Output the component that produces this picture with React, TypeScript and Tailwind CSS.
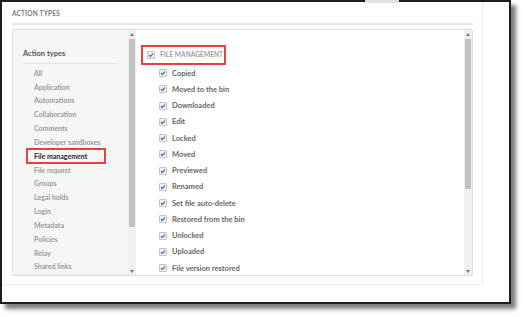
import React from "react";

const leftItems = [
  "All",
  "Application",
  "Automations",
  "Collaboration",
  "Comments",
  "Developer sandboxes",
  "File management",
  "File request",
  "Groups",
  "Legal holds",
  "Login",
  "Metadata",
  "Policies",
  "Relay",
  "Shared links",
];

const rightItems = [
  "Copied",
  "Moved to the bin",
  "Downloaded",
  "Edit",
  "Locked",
  "Moved",
  "Previewed",
  "Renamed",
  "Set file auto-delete",
  "Restored from the bin",
  "Unlocked",
  "Uploaded",
  "File version restored",
];

function Check() {
  return (
    <span className="flex h-[8px] w-[8px] shrink-0 items-center justify-center rounded-[1px] border border-[#c4c4c4] bg-[#eeeeee]">
      <svg width="6" height="6" viewBox="0 0 6 6">
        <path d="M1 3.2 L2.4 4.5 L5 1.6" fill="none" stroke="#2f6fc0" strokeWidth="1.2" />
      </svg>
    </span>
  );
}

function ScrollBar({ thumbTop, thumbH }: { thumbTop: number; thumbH: number }) {
  return (
    <div className="relative flex w-[8px] shrink-0 flex-col bg-[#f0f0f0]">
      <div className="flex h-[8px] items-center justify-center">
        <svg width="4" height="3" viewBox="0 0 4 3">
          <path d="M0 3 L2 0 L4 3 Z" fill="#777" />
        </svg>
      </div>
      <div className="mx-[1px] bg-[#c2c2c2]" style={{ marginTop: thumbTop, height: thumbH }} />
      <div className="flex-1" />
      <div className="flex h-[8px] items-center justify-center">
        <svg width="4" height="3" viewBox="0 0 4 3">
          <path d="M0 0 L2 3 L4 0 Z" fill="#777" />
        </svg>
      </div>
    </div>
  );
}

export default function App() {
  return (
    <div
      className="relative h-[317px] w-[524px] overflow-hidden bg-white"
      style={{ fontFamily: "Lato, 'Open Sans', sans-serif" }}
    >
      <div className="absolute left-[365px] top-0 h-[3px] w-[34px] rounded-b-[2px] bg-[#e2e2e2]" />
      <div className="h-[304px] w-[511px] border-2 border-[#1e1e1e] bg-white shadow-[5px_5px_4px_rgba(0,0,0,0.5)]">
        <div className="h-[283px] w-[481px] border-b border-r border-[#ececec] pl-[10px] pr-[9px]">
          <div className="flex h-[21px] items-center pt-[2px] text-[6.5px] font-bold tracking-[0.2px] text-[#7a7a7a]">
            ACTION TYPES
          </div>
          <div className="h-[2px] bg-[#e6e6e6]" />
          <div className="mt-[4px] flex h-[247px] overflow-hidden rounded-[2px] border border-[#dcdcdc]">
            <div className="w-[115px] shrink-0 overflow-hidden bg-[#f6f6f6] pl-[10px] pr-[10px]">
              <div className="flex h-[33px] items-end pb-[4px] text-[7.5px] font-bold text-[#555]">
                Action types
              </div>
              <div className="h-px bg-[#e3e3e3]" />
              <div className="pt-[2px] pl-[11px]">
                {leftItems.map((t) => (
                  <div key={t} className="relative flex h-[13.85px] items-center">
                    {t === "File management" && (
                      <div className="absolute left-[-8px] top-[-1px] h-[16px] w-[80px] border-2 border-[#e8403f]" />
                    )}
                    <span
                      className={
                        t === "File management"
                          ? "text-[7px] font-bold text-[#2a2a2a]"
                          : "text-[7px] font-bold text-[#9a9a9a]"
                      }
                    >
                      {t}
                    </span>
                  </div>
                ))}
              </div>
            </div>
            <ScrollBar thumbTop={1} thumbH={188} />
            <div className="min-w-0 flex-1 overflow-hidden pl-[5px]">
              <div className="mt-[15px] flex h-[20px] w-[85px] items-center gap-[5px] border-2 border-[#e8403f] pl-[4px]">
                <Check />
                <span className="text-[6.5px] font-bold tracking-[0.1px] text-[#a0a0a0]">FILE MANAGEMENT</span>
              </div>
              <div className="pl-[18px]">
                {rightItems.map((t) => (
                  <div key={t} className="flex h-[16.25px] items-center gap-[5px]">
                    <Check />
                    <span className="text-[7.5px] font-bold text-[#666]">{t}</span>
                  </div>
                ))}
              </div>
            </div>
            <ScrollBar thumbTop={1} thumbH={150} />
          </div>
        </div>
      </div>
    </div>
  );
}
